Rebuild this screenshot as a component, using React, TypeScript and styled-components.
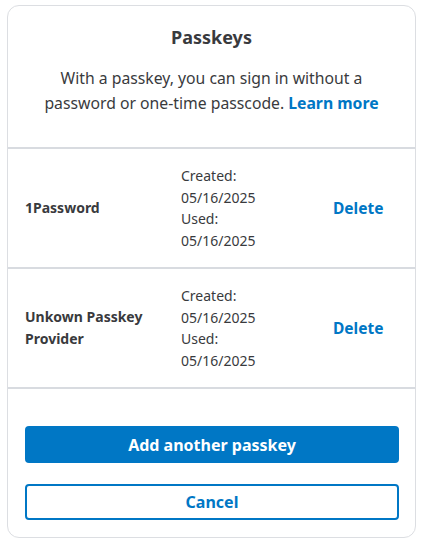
import styled, { createGlobalStyle } from 'styled-components';

const GlobalStyle = createGlobalStyle`
    html, body {
        margin: 0;
        padding: 0;
        background: #ffffff;
    }
    body {
        font-family: "Noto Sans", "Liberation Sans", sans-serif;
        color: #393a3d;
    }
`;

const Page = styled.div`
    padding: 5px 7px 7px 7px;
`;

const Card = styled.div`
    width: 409px;
    box-sizing: border-box;
    border: 1px solid #dcdee2;
    border-radius: 12px;
    overflow: hidden;
    background: #fff;
`;

const Header = styled.div`
    padding: 20px 26px 0 26px;
    height: 143px;
    box-sizing: border-box;
    text-align: center;
    border-bottom: 2px solid #d8dbe0;
`;

const Title = styled.h2`
    margin: 0;
    font-size: 18px;
    font-weight: 700;
    line-height: 22px;
    color: #393a3d;
`;

const Description = styled.p`
    margin: 18px 0 0 0;
    font-size: 15.75px;
    line-height: 25px;
    color: #393a3d;
`;

const Link = styled.a`
    color: #0077c5;
    font-weight: 700;
    text-decoration: none;
    margin-left: 4px;
`;

const Row = styled.div`
    display: grid;
    grid-template-columns: 156px 152px 1fr;
    align-items: center;
    height: 120px;
    box-sizing: border-box;
    padding: 0 17px;
    border-bottom: 2px solid #d8dbe0;
`;

const Provider = styled.div`
    font-size: 14px;
    font-weight: 700;
    line-height: 22px;
    color: #393a3d;
`;

const Dates = styled.div`
    font-size: 14px;
    line-height: 21.5px;
    color: #393a3d;
`;

const DeleteButton = styled.button`
    background: none;
    border: none;
    padding: 0;
    font-family: inherit;
    font-size: 15.5px;
    font-weight: 700;
    color: #0077c5;
    cursor: pointer;
    justify-self: start;
`;

const Actions = styled.div`
    display: flex;
    flex-direction: column;
    gap: 21px;
    padding: 37px 16px 17px 17px;
`;

const Button = styled.button<{ $variant: 'primary' | 'secondary' }>`
    width: 100%;
    height: ${p => (p.$variant === 'primary' ? '37px' : '36px')};
    border-radius: 4px;
    font-family: inherit;
    font-size: 16px;
    font-weight: 700;
    cursor: pointer;
    box-sizing: border-box;
    background: ${p => (p.$variant === 'primary' ? '#0077c5' : '#ffffff')};
    color: ${p => (p.$variant === 'primary' ? '#ffffff' : '#0077c5')};
    border: ${p => (p.$variant === 'primary' ? 'none' : '2px solid #0077c5')};
`;

const passkeys = [
    { id: 1, name: '1Password', created: '05/16/2025', used: '05/16/2025' },
    { id: 2, name: 'Unkown Passkey Provider', created: '05/16/2025', used: '05/16/2025' },
];

export default function App() {
    return (
        <Page>
            <GlobalStyle />
            <Card>
                <Header>
                    <Title>Passkeys</Title>
                    <Description>
                        With a passkey, you can sign in without a password or one-time passcode.
                        <Link href="#">Learn more</Link>
                    </Description>
                </Header>
                {passkeys.map(pk => (
                    <Row key={pk.id}>
                        <Provider>{pk.name}</Provider>
                        <Dates>
                            <div>Created:</div>
                            <div>{pk.created}</div>
                            <div>Used:</div>
                            <div>{pk.used}</div>
                        </Dates>
                        <DeleteButton>Delete</DeleteButton>
                    </Row>
                ))}
                <Actions>
                    <Button $variant="primary">Add another passkey</Button>
                    <Button $variant="secondary">Cancel</Button>
                </Actions>
            </Card>
        </Page>
    );
}
